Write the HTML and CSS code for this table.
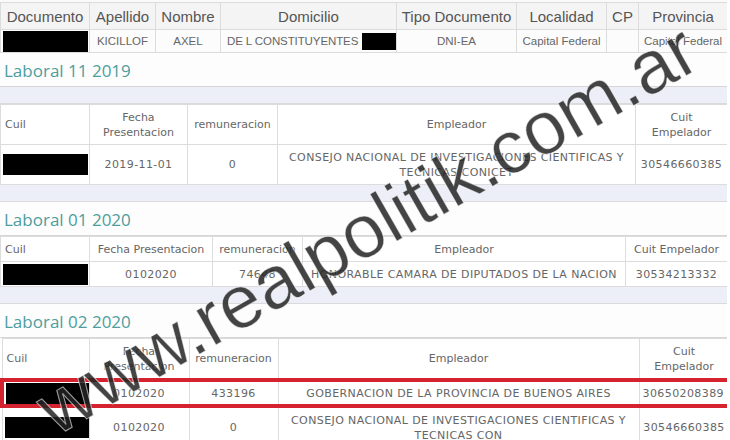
FILE: index.html
```html
<!DOCTYPE html>
<html lang="es">
<head>
  <meta charset="UTF-8">
  <title>Consulta Laboral</title>
  <link rel="stylesheet" href="styles.css">
</head>
<body>
  <div class="page">
    <table class="persona">
      <colgroup>
        <col style="width:89px"><col style="width:66px"><col style="width:65px"><col style="width:176px">
        <col style="width:120px"><col style="width:90px"><col style="width:32px"><col style="width:89px">
      </colgroup>
      <tr>
        <th>Documento</th><th>Apellido</th><th>Nombre</th><th>Domicilio</th>
        <th>Tipo Documento</th><th>Localidad</th><th>CP</th><th>Provincia</th>
      </tr>
      <tr>
        <td><span class="tachado"></span></td>
        <td>KICILLOF</td>
        <td>AXEL</td>
        <td class="domicilio">DE L CONSTITUYENTES<span class="tachado chico"></span></td>
        <td>DNI-EA</td>
        <td>Capital Federal</td>
        <td></td>
        <td>Capital Federal</td>
      </tr>
    </table>

    <h2 class="titulo">Laboral 11 2019</h2>
    <div class="separador"></div>
    <table class="laboral alto">
      <colgroup>
        <col style="width:89px"><col style="width:98px"><col style="width:90px"><col style="width:358px"><col style="width:92px">
      </colgroup>
      <tr>
        <th class="izq">Cuil</th><th>Fecha<br>Presentacion</th><th>remuneracion</th><th>Empleador</th><th>Cuit<br>Empelador</th>
      </tr>
      <tr>
        <td><span class="tachado"></span></td>
        <td>2019-11-01</td>
        <td>0</td>
        <td>CONSEJO NACIONAL DE INVESTIGACIONES CIENTIFICAS Y<br>TECNICAS CONICET</td>
        <td>30546660385</td>
      </tr>
    </table>
    <div class="separador"></div>

    <h2 class="titulo">Laboral 01 2020</h2>
    <table class="laboral">
      <colgroup>
        <col style="width:89px"><col style="width:123px"><col style="width:90px"><col style="width:323px"><col style="width:102px">
      </colgroup>
      <tr>
        <th class="izq">Cuil</th><th>Fecha Presentacion</th><th>remuneracion</th><th>Empleador</th><th>Cuit Empelador</th>
      </tr>
      <tr>
        <td><span class="tachado"></span></td>
        <td>0102020</td>
        <td>74648</td>
        <td>HONORABLE CAMARA DE DIPUTADOS DE LA NACION</td>
        <td>30534213332</td>
      </tr>
    </table>
    <div class="separador"></div>

    <h2 class="titulo">Laboral 02 2020</h2>
    <table class="laboral alto">
      <colgroup>
        <col style="width:87px"><col style="width:100px"><col style="width:89px"><col style="width:361px"><col style="width:90px">
      </colgroup>
      <tr>
        <th class="izq">Cuil</th><th>Fecha<br>Presentacion</th><th>remuneracion</th><th>Empleador</th><th>Cuit<br>Empelador</th>
      </tr>
      <tr class="marcado">
        <td><span class="tachado"></span></td>
        <td>0102020</td>
        <td>433196</td>
        <td>GOBERNACION DE LA PROVINCIA DE BUENOS AIRES</td>
        <td>30650208389</td>
      </tr>
      <tr>
        <td><span class="tachado"></span></td>
        <td>0102020</td>
        <td>0</td>
        <td>CONSEJO NACIONAL DE INVESTIGACIONES CIENTIFICAS Y<br>TECNICAS CON</td>
        <td>30546660385</td>
      </tr>
    </table>

    <div class="marca">www.realpolitik.com.ar</div>
  </div>
</body>
</html>
```

FILE: styles.css
```css
body {
  margin: 0;
  background: #fff;
  font-family: "DejaVu Sans", Verdana, sans-serif;
  color: #666;
}

.page {
  position: relative;
  width: 727px;
  height: 440px;
  overflow: hidden;
  background: #fafafa;
}

table {
  width: 727px;
  table-layout: fixed;
  border-collapse: collapse;
}

th, td {
  border: 1px solid #dcdcdc;
  padding: 0 3px;
  text-align: center;
  font-weight: normal;
  white-space: nowrap;
  overflow: hidden;
}

.tachado {
  display: block;
  width: 85px;
  height: 21px;
  margin-left: -1px;
  background: #000;
}

.tachado.chico {
  display: inline-block;
  width: 39px;
  height: 17px;
  margin: 0 0 0 4px;
  vertical-align: middle;
}

/* datos personales */
.persona {
  margin-top: 2px;
  font-family: "Liberation Sans", Arial, sans-serif;
  color: #555;
}

.persona th {
  height: 26px;
  font-size: 15px;
  background: #f4f4f4;
}

.persona td {
  height: 22px;
  font-size: 11.5px;
  color: #666;
  background: #fcfcfc;
}

.persona .domicilio {
  text-align: left;
  padding-left: 6px;
  letter-spacing: -0.1px;
}

/* bloques laborales */
.titulo {
  margin: 0;
  height: 33px;
  line-height: 36px;
  padding-left: 4px;
  font-family: "Open Sans", "DejaVu Sans", sans-serif;
  font-size: 17px;
  font-weight: normal;
  color: #4d9d9d;
  background: #fdfdfd;
  border-bottom: 1px solid #d6d6d6;
}

.separador {
  height: 16px;
  background: #eceef8;
  border-bottom: 1px solid #dadada;
}

.laboral {
  font-size: 11px;
  line-height: 15px;
  background: #fff;
}

.laboral td {
  letter-spacing: 0.4px;
}

.laboral th, .laboral td {
  height: 24px;
}

.laboral.alto th, .laboral.alto td {
  height: 39px;
}

.laboral .izq {
  text-align: left;
  padding-left: 4px;
}

.laboral tr.marcado td {
  height: 22px;
  border-top: 4px solid #d4232e;
  border-bottom: 4px solid #d4232e;
}

.laboral tr.marcado td:first-child {
  border-left: 4px solid #d4232e;
}

.laboral tr.marcado td:last-child {
  border-right: 4px solid #d4232e;
}

/* marca de agua */
.marca {
  position: absolute;
  left: 367px;
  top: 229px;
  transform: translate(-50%, -50%) rotate(-29.8deg);
  font-family: "Liberation Sans", Arial, sans-serif;
  font-size: 75px;
  line-height: 1;
  white-space: nowrap;
  color: rgba(35, 35, 35, 0.85);
  -webkit-text-stroke: 1px rgba(255, 255, 255, 0.6);
  pointer-events: none;
}
```
